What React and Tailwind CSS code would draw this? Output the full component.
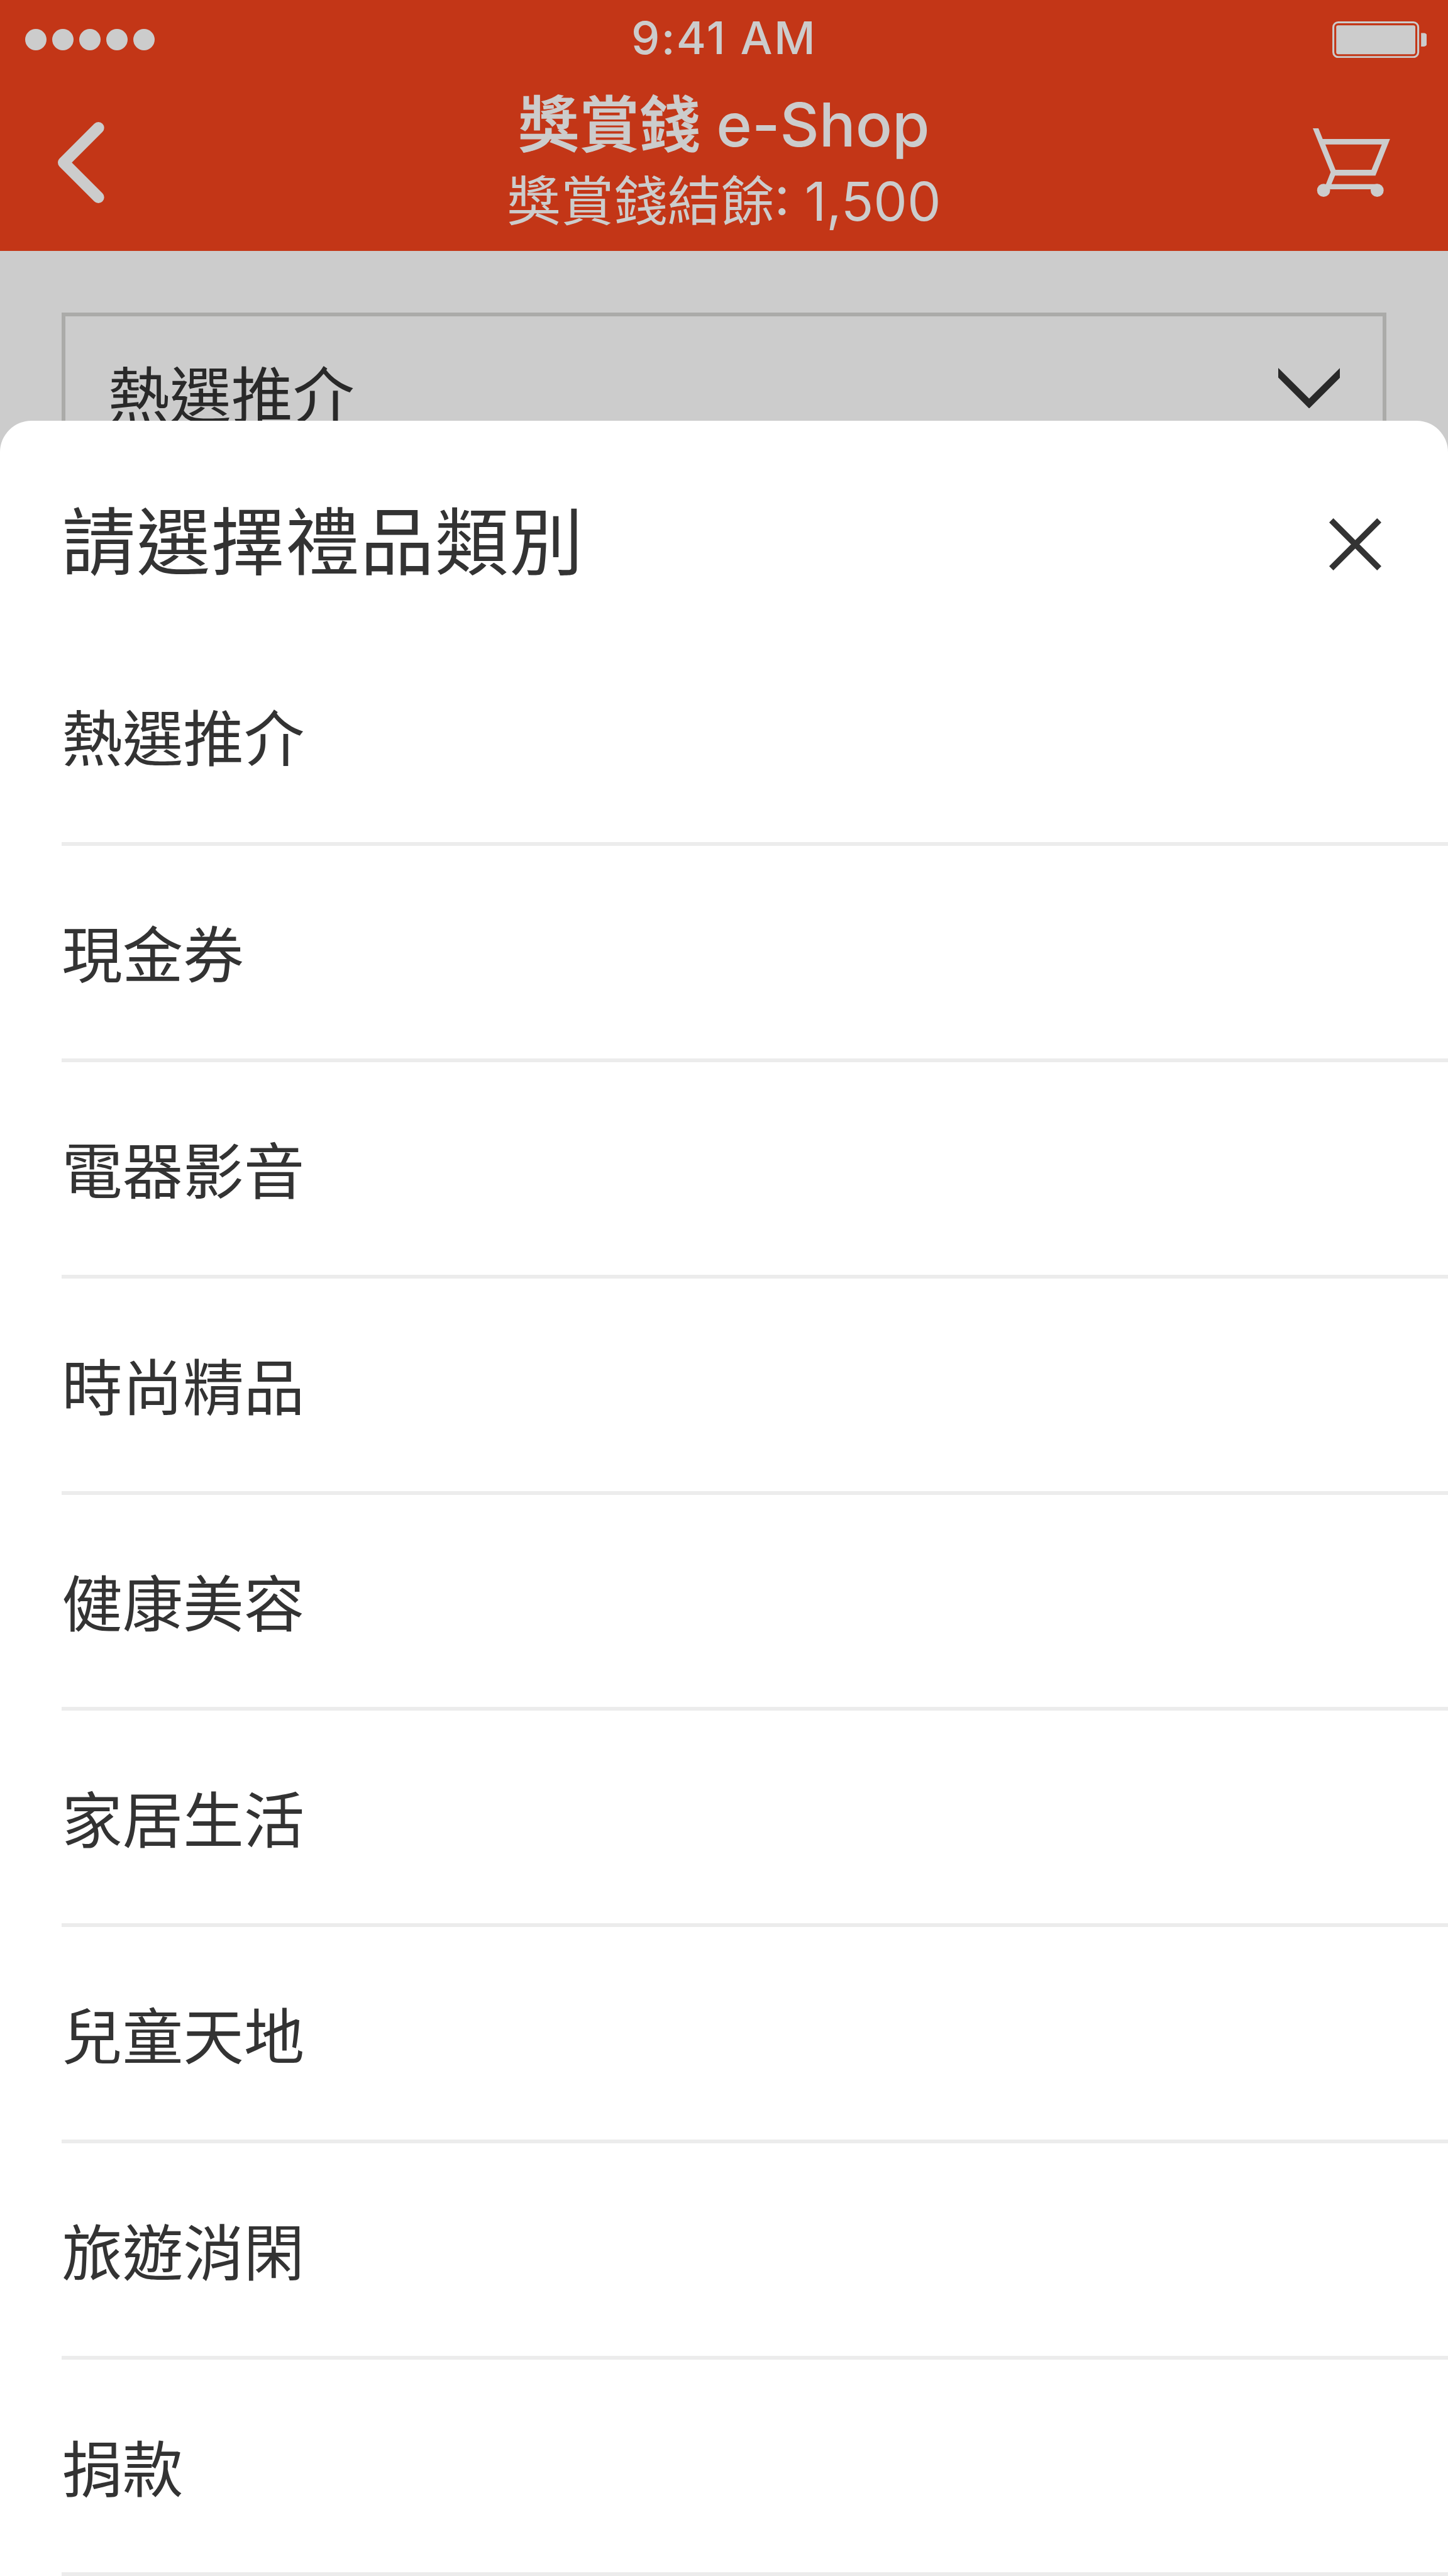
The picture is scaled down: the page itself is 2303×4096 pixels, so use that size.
const categories = [
  '熱選推介',
  '現金券',
  '電器影音',
  '時尚精品',
  '健康美容',
  '家居生活',
  '兒童天地',
  '旅遊消閑',
  '捐款',
]

function BatteryIcon() {
  return (
    <svg viewBox="0 0 196 76" className="w-[150.5px] h-[58.3px]" fill="currentColor">
      <rect x="2" y="2" width="176" height="72" rx="10" fill="none" stroke="currentColor" strokeWidth="4" />
      <rect x="8" y="8" width="164" height="60" rx="4" />
      <path d="M184 24h6a6 6 0 0 1 6 6v16a6 6 0 0 1-6 6h-6z" />
    </svg>
  )
}

function BackIcon() {
  return (
    <svg viewBox="0 0 96 168" className="w-[73.7px] h-[129px]" fill="none" stroke="currentColor" strokeWidth="24" strokeLinecap="round" strokeLinejoin="round">
      <path d="M84 12L12 84l72 72" />
    </svg>
  )
}

function CartIcon() {
  return (
    <svg viewBox="0 0 160 142" className="w-[122.8px] h-[109px]" fill="currentColor">
      <path fillRule="evenodd" d="M0 0h11.7l8.8 22H160l-30.2 76H46l-7.3 17.5h95v11H27.3V115.500L37 91zM26 33.700h117L121.700 86H47z" />
      <circle cx="22.300" cy="128.500" r="13.500" />
      <circle cx="133.300" cy="128.500" r="13.500" />
    </svg>
  )
}

export default function App() {
  return (
    <div className="w-[2303px] h-[4096px] overflow-hidden flex flex-col bg-[#cccccc] font-['Inter','Noto_Sans_CJK_TC',sans-serif]">

      {/* Header */}
      <header className="h-[399.2px] shrink-0 bg-[#c33617] text-[#cccccc]">
        <div className="h-[120px] grid grid-cols-3 items-center px-[34px] pt-[6px]">
          <div className="flex gap-[9.2px] pl-[6px]">
            {[0, 1, 2, 3, 4].map((dot) => (
              <span key={dot} className="size-[33.8px] rounded-full bg-[#cccccc]" />
            ))}
          </div>
          <div className="text-center text-[72px] leading-[120px] font-[550] tracking-[2.4px] whitespace-nowrap -mt-[6px]">9:41 AM</div>
          <div className="flex justify-end">
            <BatteryIcon />
          </div>
        </div>
        <div className="h-[279.2px] grid grid-cols-[300px_1fr_300px]">
          <div className="flex items-center pl-[92px] pb-[3px]">
            <BackIcon />
          </div>
          <div className="pt-[18.4px] text-center whitespace-nowrap">
            <h1 className="text-[96.4px] leading-[120px] font-medium">
              {/* The CJK face has no medium weight, so thicken the strokes a little */}
              <span className="[-webkit-text-stroke:1.2px_#cccccc]">獎賞錢</span> e-Shop
            </h1>
            <p className="text-[85px] leading-[125px]">獎賞錢結餘: 1,500</p>
          </div>
          <div className="flex items-center justify-end pr-[92px] pb-[3px]">
            <CartIcon />
          </div>
        </div>
      </header>

      {/* Selected category, partly behind the sheet */}
      <div className="h-[270.2px] shrink-0 px-[98.2px] pt-[98.2px]">
        <div className="h-[260px] border-[6px] border-[#ababa9] flex items-start justify-between pl-[67.5px] pr-[67.5px] text-[#292929]">
          <span className="text-[98px] leading-[120px] pt-[59px] font-['Noto_Sans_CJK_TC',sans-serif]">熱選推介</span>
          <svg viewBox="0 0 128 84" className="w-[98.3px] h-[64.5px] mt-[81.5px]" fill="currentColor">
            <path d="M0 0l64 63.500L128 0v20L64 84 0 20z" />
          </svg>
        </div>
      </div>

      {/* Bottom sheet */}
      <section className="relative grow bg-white rounded-t-[50px] text-[#333333] font-['Noto_Sans_CJK_TC',sans-serif]">
        <div className="h-[331.6px] flex items-start justify-between pl-[98.2px] pr-[106px]">
          <h2 className="text-[117.2px] leading-[160px] tracking-[1.5px] pt-[105px]">請選擇禮品類別</h2>
          <svg viewBox="0 0 108 108" className="size-[83px] mt-[155px]" fill="none" stroke="currentColor" strokeWidth="12.3">
            <path d="M4.350 4.350l99.300 99.300M103.650 4.350l-99.300 99.300" />
          </svg>
        </div>
        <ul className="pl-[98.2px]">
          {categories.map((name) => (
            <li key={name} className="h-[343.9px] flex items-center border-b-[6px] border-[#ececec] pb-[3px] text-[96.5px] leading-[140px]">
              {name}
            </li>
          ))}
        </ul>
      </section>
    </div>
  )
}
